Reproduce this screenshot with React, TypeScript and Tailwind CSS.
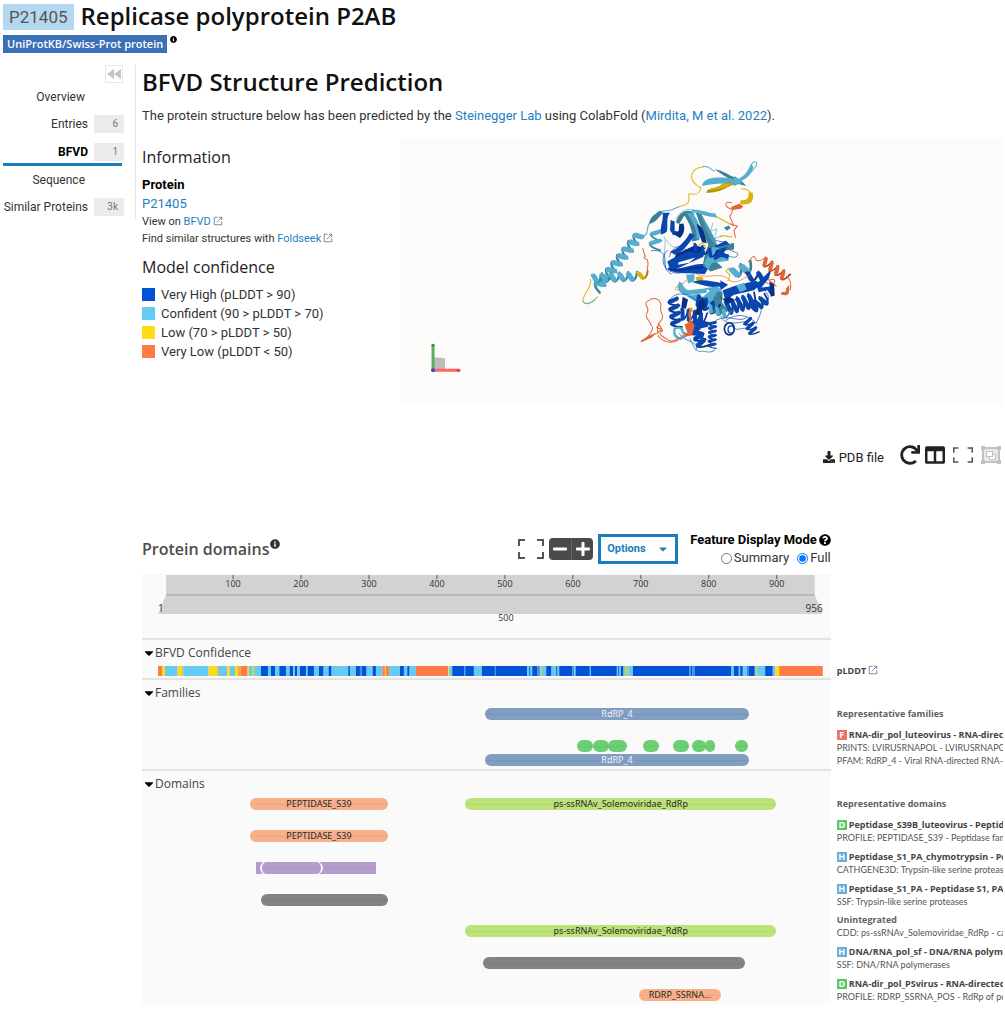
import type { ReactNode } from "react";
import {
  FaCaretDown,
  FaColumns,
  FaDownload,
  FaInfoCircle,
  FaMinus,
  FaPlus,
  FaQuestionCircle,
  FaRedo,
} from "react-icons/fa";

const SEQUENCE_LENGTH = 956;

const NAV_ITEMS = [
  { label: "Overview" },
  { label: "Entries", count: "6" },
  { label: "BFVD", count: "1", active: true },
  { label: "Sequence" },
  { label: "Similar Proteins", count: "3k" },
];

const LEGEND = [
  { label: "Very High (pLDDT > 90)", color: "bg-[#0053d6]" },
  { label: "Confident (90 > pLDDT > 70)", color: "bg-[#65cbf3]" },
  { label: "Low (70 > pLDDT > 50)", color: "bg-[#ffdb13]" },
  { label: "Very Low (pLDDT < 50)", color: "bg-[#ff7d45]" },
];

const CONFIDENCE_COLORS: Record<string, string> = {
  B: "#0053d6",
  M: "#3590e4",
  C: "#65cbf3",
  G: "#b4cf6c",
  Y: "#ffdb13",
  A: "#ffa72c",
  O: "#ff7d45",
};

const CONFIDENCE_END = 1995;

// "<color><start>", each run lasts until the next one starts
const CONFIDENCE =
  "O0 Y12 C21 Y59 G72 C76 Y152 G176 C183 Y208 C216 Y231 A239 O249 Y269 C273 G283 C291 B309 C330 B339 C352 B364 C384 B395 C406 B411 C418 B426 C444 B449 C468 B483 C497 B512 C521 B571 C576 B594 M606 B611 C626 B644 C654 O674 Y681 O684 C693 B726 C738 B748 C755 O774 Y871 C874 B883 M919 B922 C948 B972 M1011 B1013 C1108 B1114 C1118 B1123 M1139 G1146 C1152 B1165 C1181 B1195 C1199 B1204 M1243 C1249 B1253 C1296 B1299 C1377 B1381 C1385 B1389 C1397 G1402 C1413 B1425 M1594 B1598 M1604 B1610 C1721 B1728 C1743 B1747 C1755 M1767 B1772 C1791 G1794 C1800 B1822 C1845 Y1853 O1864"
    .split(" ")
    .map((run) => ({ color: CONFIDENCE_COLORS[run[0]], start: Number(run.slice(1)) }));

interface Feature {
  start: number;
  end: number;
  color: string;
  label?: string;
  shape?: string;
}

interface Row {
  features: Feature[];
  heading?: string;
  type?: "F" | "D" | "H";
  title?: string;
  source?: string;
}

const BLUE = "bg-[#7f9ec2] text-gray-100";
const GREEN = "bg-[#6ccf73]";
const PEACH = "bg-[#f8b08b] text-[#2b2b2b]";
const LIME = "bg-[#bce377] text-[#2b2b2b]";
const GREY = "bg-[#838383]";
const PURPLE = "bg-[#b79dcf]";

const RDRP: Feature = { start: 471, end: 850, color: BLUE, label: "RdRP_4" };

const PRINTS: Feature[] = [
  [604, 625],
  [627, 648],
  [648, 674],
  [698, 721],
  [741, 764],
  [769, 788],
  [787, 801],
  [831, 848],
].map(([start, end]) => ({ start, end, color: GREEN }));

const PEPTIDASE: Feature = { start: 133, end: 331, color: PEACH, label: "PEPTIDASE_S39" };
const SOLEMO: Feature = { start: 443, end: 889, color: LIME, label: "ps-ssRNAv_Solemoviridae_RdRp" };

const DOMAIN_ROWS: Row[] = [
  {
    features: [PEPTIDASE],
    type: "D",
    title: "Peptidase_S39B_luteovirus - Peptidase S39, luteovirus",
    source: "PROFILE: PEPTIDASE_S39 - Peptidase family S39 domain profile",
  },
  {
    features: [
      { start: 142, end: 150, color: PURPLE, shape: "rounded-none" },
      { start: 234, end: 314, color: PURPLE, shape: "rounded-none" },
      { start: 147, end: 237, color: PURPLE, shape: "rounded-full border-x-2 border-[#fafafa]" },
    ],
    type: "H",
    title: "Peptidase_S1_PA_chymotrypsin - Peptidase S1, PA clan",
    source: "CATHGENE3D: Trypsin-like serine proteases",
  },
  {
    features: [{ start: 149, end: 331, color: GREY }],
    type: "H",
    title: "Peptidase_S1_PA - Peptidase S1, PA clan",
    source: "SSF: Trypsin-like serine proteases",
  },
  {
    features: [SOLEMO],
    heading: "Unintegrated",
    source: "CDD: ps-ssRNAv_Solemoviridae_RdRp - catalytic core domain",
  },
  {
    features: [{ start: 469, end: 844, color: GREY }],
    type: "H",
    title: "DNA/RNA_pol_sf - DNA/RNA polymerase superfamily",
    source: "SSF: DNA/RNA polymerases",
  },
  {
    features: [{ start: 693, end: 809, color: PEACH, label: "RDRP_SSRNA..." }],
    type: "D",
    title: "RNA-dir_pol_PSvirus - RNA-directed RNA polymerase",
    source: "PROFILE: RDRP_SSRNA_POS - RdRp of positive ssRNA viruses",
  },
];

const TYPE_COLORS = {
  F: "bg-[#ec7063]",
  D: "bg-[#5ec465]",
  H: "bg-[#65aed9]",
};

const ExternalIcon = () => (
  <svg viewBox="0 0 12 12" className="ml-0.5 inline size-2.5 align-[-1px] text-gray-500" fill="none" stroke="currentColor">
    <path d="M5.5 1.5h-4v9h9v-4M7 1.5h3.5V5M10.5 1.5l-6 6" />
  </svg>
);

const ExpandIcon = ({ className }: { className: string }) => (
  <svg viewBox="0 0 26 20" className={className} fill="none" stroke="currentColor" strokeWidth="2">
    <path d="M7 1H1v6M19 1h6v6M7 19H1v-6M19 19h6v-6" />
  </svg>
);

const GroupIcon = () => (
  <svg viewBox="0 0 20 18" className="h-[18px] w-5" fill="currentColor">
    <path d="M0 0h4v1h12V0h4v4h-1v10h1v4h-4v-1H4v1H0v-4h1V4H0z" />
    <path d="M3 4h1V3h12v1h1v10h-1v1H4v-1H3z" fill="#e9e9e9" />
    <path d="M5 5h7v3h3v6H8v-3H5z" />
    <path d="M6 6h5v4H6z" fill="#fff" />
    <path d="M12 9h2v4H9v-2h3z" fill="#fff" />
  </svg>
);

/* ---------- structure ---------- */

const NAVY = "#0a46b0";
const DEEP = "#082f86";
const SKY = "#54aed0";
const TEAL = "#3a8199";
const GOLD = "#d8b40f";
const CORAL = "#e2643b";

interface HelixProps {
  from: [number, number];
  to: [number, number];
  turns: number;
  amp?: number;
  color: string;
  dark: string;
  width?: number;
}

// Flat ribbon: wide front bands joined by thinner shaded strands behind them
const Helix = ({ from, to, turns, amp = 15, color, dark, width = 10 }: HelixProps) => {
  const [x1, y1] = from;
  const [x2, y2] = to;
  const length = Math.hypot(x2 - x1, y2 - y1);
  const ux = (x2 - x1) / length;
  const uy = (y2 - y1) / length;
  const step = length / turns;
  const at = (along: number, side: number) =>
    `${(x1 + ux * along - uy * side).toFixed(1)} ${(y1 + uy * along + ux * side).toFixed(1)}`;
  const coils = Array.from({ length: turns }, (_, i) => i * step);
  const w = width * 0.55;
  return (
    <g>
      {coils.map((s) => (
        <path
          key={`b${s}`}
          d={`M${at(s + step * 0.4, amp)}Q${at(s + step * 0.85, amp * 0.9)} ${at(s + step, -amp)}`}
          fill="none"
          stroke={dark}
          strokeWidth={width * 0.45}
        />
      ))}
      {coils.map((s) => (
        <path
          key={`f${s}`}
          d={`M${at(s - w, -amp * 0.8)}Q${at(s, -amp * 1.3)} ${at(s + w, -amp * 0.8)}L${at(s + step * 0.4 + w, amp * 0.7)}Q${at(s + step * 0.4, amp * 1.4)} ${at(s + step * 0.4 - w, amp * 0.9)}Z`}
          fill={color}
        />
      ))}
    </g>
  );
};

const ProteinDrawing = () => (
  <g strokeLinejoin="round" strokeLinecap="round">
    {/* N-terminal helices */}
    <Helix from={[212, 284]} to={[80, 448]} turns={8} amp={15} color={SKY} dark={TEAL} width={15} />
    <Helix from={[72, 414]} to={[204, 408]} turns={5} amp={13} color={SKY} dark={TEAL} width={15} />
    <Helix from={[208, 406]} to={[236, 404]} turns={1} amp={11} color={GOLD} dark="#9b7e08" width={13} />
    <g fill="none" strokeWidth="3">
      <path d="M64 418c6 22-24 44-23 66 12 14 32 0 44-14" stroke={GOLD} />
      <path d="M41 484c8 12 26 6 36-6M208 284c14 6 26 2 26-12 0-12 4-20 9-26M275 215c12-6 20 0 32-6 10-5 16-8 24-10" stroke={SKY} />
      <path d="M234 401c-2-18 6-30 0-42-10-6-14-4-6-10-6-14-6-18-7-25" stroke={CORAL} />
      <path d="M331 199c16-4 28-6 28-20 0-12-6-20 10-17 16 2 22-4 26-18C348 118 366 84 402 80" stroke={GOLD} />
      <path d="M402 80c18-3 20 8 34 14M520 112c16-8 24-26 28-42 8-10 18-2 12 8l-14 18" stroke={SKY} />
      <path d="M516 146c14 0 24 4 28 14" stroke={GOLD} />
      <path d="M490 208c-28-6-26-28-4-20M488 208c4 12-4 14-7 20l12 28-11-4 22 6-10 12 4 22" stroke={CORAL} />
      <path d="M440 230c20 6 30 20 46 22M452 290c12-8 22 2 36 0M384 318l16-10 8 12" stroke={GOLD} />
    </g>
    <path d="M240 248c4-18 14-24 32-37l10 8c-12 8-16 24-38 32z" fill={TEAL} />
    <path d="M436 88c28 4 38 18 66 26 12 6 22 14 28 24l-28-8c-20-14-40-22-66-42z" fill={TEAL} />
    <path d="M398 138c2-26 44-30 96-22l4-8 20 20-24 10-2-6c-34-4-62-2-94 6z" fill={SKY} />
    <path d="M500 118c20-4 36-22 44-46l8 8c-6 22-18 36-40 44z" fill={SKY} />
    <path d="M410 158c6-20 36-10 50-28l26-3 12 6c-24 2-32 24-88 25z" fill="#b29507" />
    <path d="M414 150c22-8 34-6 50-18l24-2c-20 14-40 18-74 20z" fill={GOLD} />
    <path d="M538 156l12 2c4 24-2 38-38 35l2-13c16 2 24 0 24-24z" fill={GOLD} />
    <path d="M486 200l24-9 12 8-8 7-26 4z" fill={CORAL} />

    {/* upper domain */}
    <g fill="none" strokeWidth="2">
      <path d="M320 235c20-34 50-30 62-20M285 290c10 30-10 50 5 100M292 300c20 40 50 10 60 40M430 250l-6 24 18-8-6 30 24-10" stroke={SKY} />
      <path d="M300 350c20-50 44-30 60-10M295 330c-20 20-20 50 10 64 28 16 50-12 70-4M410 290c20 4 40 20 60 14M476 326c20 14 40 10 24 24-10 6-22-8-30 4" stroke={NAVY} />
      <path d="M246 332c20-4 36 4 40 18 4 20-4 40 20 52" stroke={NAVY} />
      <path d="M350 420c-10 22-40 12-30 30M380 400c30 22 80-10 100 20M300 340l24-14 20 8" stroke={CORAL} />
    </g>
    <Helix from={[262, 272]} to={[256, 328]} turns={2} amp={17} color={SKY} dark={TEAL} width={12} />
    <path d="M280 218h22c-14 18-4 38-10 58l-16 8c-6-26 8-44 4-66z" fill={NAVY} />
    <path d="M304 240l12 4v28l8 2-12 12-10-16z" fill={NAVY} />
    <path d="M330 252l12-2c8 20-2 36-10 44l-20-12 16-10z" fill={DEEP} />
    <path d="M320 248c6-40 50-46 56-22l-8 2c-20-16-28 8-38 24z" fill={TEAL} />
    <path d="M344 224l18-6c28 32 22 50 28 82l-22 4c4-30-8-56-24-80z" fill={TEAL} />
    <path d="M352 218l18 2c22 26 22 44 22 76l-10 2c2-34-16-60-30-80z" fill={SKY} />
    <path d="M378 214l14-2c14 34 34 56 52 104l-12 12-10-8c-20-30-24-54-44-106z" fill={TEAL} />
    <path d="M392 216c16 30 34 56 48 96l-6 4c-18-30-30-62-42-100z" fill={SKY} opacity="0.6" />
    <path d="M368 208c34 2 44 8 64 12l4-2 8 14-20-2c-20-2-38-12-58-14z" fill={SKY} />
    <path d="M382 250c22 12 24 34 30 60l-14-4c-6-20-12-36-16-56z" fill={DEEP} />
    <path d="M302 334c20-4 46-30 60-56l14 8c-16 22-36 52-60 58z" fill={NAVY} />
    <path d="M294 364l72-40 40 10-4 16-98 44z" fill={NAVY} />
    <path d="M320 342l56-26 34 8-20 14-34-4-40 20z" fill={DEEP} />
    <path d="M328 366l50-14-18 16-34 6z" fill="#fcfbf9" />
    <path d="M296 382c40 12 70-14 108-10l14 10-12 20c-42-6-80 4-110-14z" fill={NAVY} />
    <path d="M300 388c38 8 64-8 100-6" fill="none" stroke={DEEP} strokeWidth="4" />
    <path d="M410 330l60-28 16 16-34 18 28 8-6 18-54-4-16 12z" fill={NAVY} />
    <path d="M424 296l16 26 54-14v20l-60 8-24 36 30-8 20 18-36 12-24-18 8-38z" fill={TEAL} />
    <path d="M430 320l20 4-20 32 40-8 8 14-50 6-12 22-12-20z" fill={SKY} />
    <path d="M440 330l34-10-10 18 16 20-24-8-22 12z" fill={NAVY} />
    <path d="M464 262l14-6 6 8-12 8z" fill={TEAL} />
    <Helix from={[374, 320]} to={[440, 344]} turns={3} amp={12} color={NAVY} dark={DEEP} />

    {/* palm and fingers */}
    <Helix from={[490, 398]} to={[548, 378]} turns={2} amp={16} color={SKY} dark={TEAL} width={18} />
    <Helix from={[534, 408]} to={[600, 410]} turns={2} amp={14} color={NAVY} dark={DEEP} width={14} />
    <Helix from={[584, 362]} to={[654, 414]} turns={4} amp={14} color={CORAL} dark="#9e3d1d" width={11} />
    <g fill="none" strokeWidth="3">
      <path d="M536 364c8 0 10-20 20-14 2 16 16 14 26 6M600 420c24-12 18 20 0 12s-20-10-8-18l28 24" stroke={CORAL} />
      <path d="M652 408c14 14 14 30 10 42" stroke={CORAL} />
      <path d="M478 384l-8 10 12 10-6 18M470 450l30-8M340 430c-20 0-20 30 0 20" stroke={GOLD} />
      <path d="M480 420c20 18 48-12 62-14" stroke={CORAL} strokeWidth="2" />
    </g>
    <path d="M660 434l-2 26c-6 8-16 6-24 2l4-8c10 4 14 0 12-10z" fill={CORAL} />
    <path d="M350 404l26-2-2 22-18 6z" fill={SKY} />
    <path d="M378 412c12-6 26-4 24 8l-18 6z" fill={GOLD} />
    <path d="M370 426c26-12 56-2 84 2l-2-8 24 14-22 16-2-10c-30 2-48-4-82-14z" fill={NAVY} />
    <path d="M330 424c14 6 10 22 28 26l54-6v14l-64 8c-18-6-28-24-18-42z" fill={SKY} />
    <path d="M352 468l40-8 4 14 26-22-16-8 40-6 14 18-28 34-34 6z" fill={SKY} />
    <path d="M460 450l40-14 60-14 14 10-20 18-60 14-26 18z" fill={NAVY} />
    <path d="M500 436l24-8 8 20-20 8z" fill={SKY} />
    <path d="M560 432l36-34 4 14-24 30 30-4 8 20-8 10-12-18-26 6z" fill={NAVY} />
    <path d="M600 424l14 8 2 34-12 4z" fill={DEEP} />
    <path d="M424 490l20-36 16 4-2 30 20 24-30 14-20-12z" fill={TEAL} />
    <Helix from={[312, 476]} to={[322, 562]} turns={4} amp={16} color={NAVY} dark={DEEP} width={12} />
    <Helix from={[336, 520]} to={[410, 536]} turns={4} amp={18} color={NAVY} dark={DEEP} width={11} />
    <Helix from={[384, 480]} to={[444, 510]} turns={3} amp={17} color={NAVY} dark={DEEP} width={14} />
    <Helix from={[474, 502]} to={[560, 478]} turns={5} amp={22} color={NAVY} dark={DEEP} width={12} />
    <Helix from={[548, 504]} to={[594, 474]} turns={3} amp={16} color={NAVY} dark={DEEP} width={12} />
    <Helix from={[430, 546]} to={[428, 624]} turns={6} amp={12} color={NAVY} dark={DEEP} width={8} />
    <Helix from={[534, 540]} to={[556, 582]} turns={3} amp={15} color={NAVY} dark={DEEP} width={9} />
    <Helix from={[378, 566]} to={[402, 622]} turns={3} amp={16} color={NAVY} dark={DEEP} width={13} />
    <Helix from={[420, 504]} to={[480, 524]} turns={3} amp={12} color={SKY} dark={TEAL} width={11} />
    <g fill="none" stroke={NAVY} strokeWidth="2">
      <ellipse cx="480" cy="566" rx="15" ry="18" stroke={DEEP} strokeWidth="5" />
      <ellipse cx="485" cy="568" rx="9" ry="11" strokeWidth="4" />
      <path d="M440 540c40-20 70 10 92-8M454 528c10 30 60 20 80 14M498 566c10 6 24-8 36 2M470 540c30-20 60-20 90 8M560 500c30-10 10 30 0 50M586 466c30 10-10 40-30 30M452 470c20 20 40-8 56 20M300 480c20-30 60-20 80 0M330 580c20 30 60 20 50 50M588 454c14 12 8 26 4 38" />
    </g>
    <path d="M400 470l10 22-20 34-14-4 10-30z" fill={DEEP} />
    <path d="M340 470l16 8-6 28-14-4z" fill={DEEP} />
    <path d="M460 478l20-8 16 10-20 12z" fill={DEEP} />
    <path d="M380 536l40 10-4 14-34 8 24 12-8 22-26-24-10-30z" fill={NAVY} />
    <path d="M316 566c14-8 24-2 24 10l14 8-20 12c-18-4-22-18-18-30z" fill="none" stroke={SKY} strokeWidth="7" />
    <path d="M362 596c12 20 10 34 30 38 20-6 24 10 44-4" fill="none" stroke={SKY} strokeWidth="3" />
    <path d="M346 554l20-14 10 16-8 30-24 4 10-12z" fill={CORAL} />
    <path d="M366 506c-14 20 2 22-4 38" fill="none" stroke={CORAL} strokeWidth="7" />
    <path d="M360 504l10 8" stroke={GOLD} strokeWidth="5" />

    {/* disordered tail */}
    <path
      d="M246 556c-6-18-22-24-12-40 10-14-16-22 2-34 24-16 42 0 38 20-4 16 14 24 2 38-14 14-12 24-10 40M250 560c2 12-8 22-20 36l34-18 14-10-16-6 8-8 10 18c-20 10 6 20 18 28 10 6 30-2 50-20M266 586c16 22 40 24 60 14"
      fill="none"
      stroke={CORAL}
      strokeWidth="3"
    />
    <path d="M214 602l26-16 20-8-12 14-32 14z" fill={CORAL} />
  </g>
);

const StructureViewer = () => (
  <svg viewBox="0 0 602 266" className="block w-full bg-[#fcfbf9]" role="img" aria-label="Predicted structure">
    <g transform="translate(169 2) scale(0.3333)">
      <ProteinDrawing />
    </g>
    <path d="M34 219l11 1v12H34z" fill="#bdbcba" />
    <path d="M33 207v25" stroke="#5fae60" strokeWidth="3" strokeLinecap="round" />
    <path d="M33 232h26" stroke="#ff6565" strokeWidth="3" strokeLinecap="round" />
    <circle cx="33" cy="207" r="1.5" fill="#2f9440" />
    <circle cx="58" cy="232" r="1.5" fill="#e93338" />
    <circle cx="33" cy="232" r="2" fill="#4a48c0" />
  </svg>
);

/* ---------- protein viewer ---------- */

const Bars = ({ features }: { features: Feature[] }) => (
  <div className="relative mr-2 ml-4 h-3 font-['Noto_Sans',sans-serif]">
    {features.map((feature) => (
      <div
        key={feature.start}
        className={`absolute inset-y-0 text-center text-[9px] leading-[11px] ${feature.shape ?? "rounded-full"} ${feature.color}`}
        style={{
          left: `${((feature.start - 1) / SEQUENCE_LENGTH) * 100}%`,
          width: `${((feature.end - feature.start + 1) / SEQUENCE_LENGTH) * 100}%`,
        }}
      >
        <span className="absolute inset-x-0 top-1/2 h-px bg-black/5" />
        {feature.label}
      </div>
    ))}
  </div>
);

const TypeBadge = ({ type }: { type: "F" | "D" | "H" }) => (
  <span className={`mr-0.5 inline-block size-2.5 text-center text-[9px] leading-[10px] text-white ${TYPE_COLORS[type]}`}>
    {type}
  </span>
);

const Track = ({ children, className = "" }: { children?: ReactNode; className?: string }) => (
  <div className={`bg-[#fafafa] ${className}`}>{children}</div>
);

const Side = ({ children, className = "" }: { children?: ReactNode; className?: string }) => (
  <div className={`min-w-0 overflow-hidden pl-1.5 font-['Open_Sans',sans-serif] text-[9px] leading-[13px] whitespace-nowrap text-[#5f5f5f] ${className}`}>
    {children}
  </div>
);

const Source = ({ children }: { children: ReactNode }) => (
  <p className="font-[Lato,sans-serif] text-[9px] text-[#555]">{children}</p>
);

const ROW = "grid grid-cols-[4fr_1fr]";

const SectionToggle = ({ label }: { label: string }) => (
  <button type="button" className="flex items-center pl-0.5 font-['Open_Sans',sans-serif] text-xs leading-5 text-[#444]">
    <FaCaretDown className="mr-px h-3.5 w-2.5 text-black" />
    {label}
  </button>
);

const Ruler = () => (
  <svg viewBox="0 0 689 64" className="block w-full bg-[#fafafa] font-['Open_Sans',sans-serif]" fill="#333">
    <path d="M24 1h649v20l8 19H16l8-19z" fill="#d2d2d2" />
    <path d="M24 20h649v2H24z" fill="#b8b8b8" />
    {[100, 200, 300, 400, 500, 600, 700, 800, 900].map((tick) => (
      <g key={tick}>
        <path d={`M${23 + tick * 0.68} 1v4`} stroke="#555" />
        <text x={23 + tick * 0.68} y="13" fontSize="9" textAnchor="middle">
          {tick}
        </text>
      </g>
    ))}
    <text x="16" y="38" fontSize="10">1</text>
    <text x="681" y="38" fontSize="10" textAnchor="end">956</text>
    <text x="364" y="47" fontSize="9" textAnchor="middle">500</text>
  </svg>
);

const ProteinViewer = () => (
  <section className="text-[13px]">
    <div className={ROW}>
      <div className="flex h-[38px] items-center">
        <h4 className="mr-auto flex items-start font-['Open_Sans',sans-serif] text-base leading-5 font-semibold text-[#4d4d4d]">
          Protein domains
          <FaInfoCircle className="size-2.5 text-[#333]" />
        </h4>
        <button type="button" aria-label="Full screen" className="mr-[5px]">
          <ExpandIcon className="h-5 w-[26px] text-[#555]" />
        </button>
        <button type="button" aria-label="Zoom out" className="flex h-[22px] w-[22px] items-center justify-center rounded-l-sm bg-[#4a4a4a] text-white">
          <FaMinus className="size-4" />
        </button>
        <button type="button" aria-label="Zoom in" className="mr-[5px] flex h-[22px] w-[22px] items-center justify-center rounded-r-sm border-l border-[#666] bg-[#4a4a4a] text-white">
          <FaPlus className="size-4" />
        </button>
        <button type="button" className="mr-3 flex h-[30px] w-20 items-center justify-between border-[3px] border-[#1a7dbe] bg-white px-1.5 text-[11px] font-bold text-[#1a7dbe]">
          Options
          <FaCaretDown className="size-3" />
        </button>
        <fieldset className="text-[13px] leading-[18px]">
          <legend className="flex items-center gap-0.5 font-bold text-black">
            Feature Display Mode <FaQuestionCircle className="size-3" />
          </legend>
          <div className="flex justify-end text-[#333]">
            <label className="mr-2 flex items-center gap-0.5">
              <input type="radio" name="mode" className="m-0 size-[11px]" />
              Summary
            </label>
            <label className="flex items-center gap-0.5">
              <input type="radio" name="mode" defaultChecked className="m-0 size-[11px]" />
              Full
            </label>
          </div>
        </fieldset>
      </div>
    </div>

    <div className={`mt-1.5 ${ROW}`}>
      <Ruler />
    </div>

    <div className={ROW}>
      <Track className="h-10 border-t-2 border-[#e3e3e3] pt-[3px]">
        <SectionToggle label="BFVD Confidence" />
        <svg viewBox={`0 0 ${CONFIDENCE_END} 10`} preserveAspectRatio="none" className="mt-[3px] ml-4 block h-2.5 w-[calc(100%-24px)]">
          {CONFIDENCE.map(({ color, start }, i) => (
            <rect
              key={start}
              x={start}
              width={(CONFIDENCE[i + 1]?.start ?? CONFIDENCE_END) - start}
              height="10"
              fill={color}
            />
          ))}
        </svg>
      </Track>
      <Side className="pt-[26px] font-bold text-[#444]">
        pLDDT
        <ExternalIcon />
      </Side>
    </div>

    <div className={ROW}>
      <Track className="h-[91px] border-t-2 border-[#e3e3e3] pt-[3px]">
        <SectionToggle label="Families" />
        <div className="mt-[5px] mb-5">
          <Bars features={[RDRP]} />
        </div>
        <Bars features={PRINTS} />
        <div className="mt-0.5">
          <Bars features={[RDRP]} />
        </div>
      </Track>
      <Side>
        <p className="mt-[29px] mb-2 font-bold">Representative families</p>
        <p className="font-bold text-[#444]">
          <TypeBadge type="F" />
          RNA-dir_pol_luteovirus - RNA-directed RNA polymerase
        </p>
        <Source>PRINTS: LVIRUSRNAPOL - LVIRUSRNAPOL</Source>
        <Source>PFAM: RdRP_4 - Viral RNA-directed RNA-polymerase</Source>
      </Side>
    </div>

    <div className={ROW}>
      <Track className="h-[45px] border-t-2 border-[#e3e3e3] pt-[3px]">
        <SectionToggle label="Domains" />
        <div className="mt-1">
          <Bars features={[PEPTIDASE, SOLEMO]} />
        </div>
      </Track>
      <Side className="pt-7 font-bold">Representative domains</Side>
    </div>

    <div className="grid h-[190px] auto-rows-fr">
      {DOMAIN_ROWS.map((row) => (
        <div key={row.source} className={ROW}>
          <Track className="pt-4">
            <Bars features={row.features} />
          </Track>
          <Side className="pt-1">
            <p className="font-bold text-[#444]">
              {row.type && <TypeBadge type={row.type} />}
              {row.title ?? <span className="text-[#5f5f5f]">{row.heading}</span>}
            </p>
            <Source>{row.source}</Source>
          </Side>
        </div>
      ))}
    </div>
  </section>
);

/* ---------- page ---------- */

const Sidebar = () => (
  <nav className="h-[155px] w-[133px] shrink-0 border-r border-[#e6e6e6] text-xs leading-5 text-[#333]">
    <div className="flex justify-end pr-3">
      <button type="button" aria-label="Collapse menu" className="flex size-[18px] items-center justify-center border border-[#e8e8e8] text-[#c4c4c4]">
        <svg viewBox="0 0 14 12" className="h-3 w-3.5" fill="currentColor">
          <path d="M7 1v10L0 6zM14 1v10L7 6z" />
        </svg>
      </button>
    </div>
    <ul className="w-[121px]">
      {NAV_ITEMS.map(({ label, count, active }) => (
        <li key={label} className={active ? "flex h-[29px] w-[119px] items-end border-b-[3px] border-[#1a7dbe] pb-px" : "flex h-[27px] items-center"}>
          <a href="#" className={`flex grow items-center justify-end gap-1.5 whitespace-nowrap ${active ? "-mr-0.5 font-bold text-black" : ""}`}>
            {label}
            {count ? (
              <span className="w-[30px] bg-[#ececec] pr-1.5 text-right text-[10px] leading-[18px] font-normal text-[#777]">
                {count}
              </span>
            ) : (
              <span className="w-[33px]" />
            )}
          </a>
        </li>
      ))}
    </ul>
  </nav>
);

const Link = ({ children }: { children: ReactNode }) => (
  <a href="#" className="text-[#1f7fc1]">
    {children}
  </a>
);

export default function App() {
  return (
    <div className="w-full bg-white pr-0.5 pb-5 pl-[3px] font-[Roboto,'Liberation_Sans',sans-serif] text-[#333]">
      <header>
        <div className="flex items-center gap-[7px]">
          <span className="mt-0.5 bg-[#b5d8f1] px-1.5 text-[17px] leading-[26px] text-[#555]">P21405</span>
          <h1 className="font-['Open_Sans',sans-serif] text-2xl leading-8 font-semibold text-[#111]">
            Replicase polyprotein P2AB
          </h1>
        </div>
        <div className="mt-[3px] flex h-[18px] items-start">
          <span className="bg-[#3b6fb6] px-1 font-['Open_Sans',sans-serif] text-[11px] leading-[18px] font-semibold text-white">
            UniProtKB/Swiss-Prot protein
          </span>
          <FaInfoCircle className="mt-px ml-[3px] size-[7px] text-black" />
        </div>
      </header>

      <div className="mt-3 flex">
        <Sidebar />
        <main className="ml-1.5 min-w-0 grow">
          <h2 className="pt-0.5 font-['Open_Sans',sans-serif] text-2xl leading-[30px] font-semibold text-[#111]">
            BFVD Structure Prediction
          </h2>
          <p className="mt-[9px] text-[13px] leading-5">
            The protein structure below has been predicted by the <Link>Steinegger Lab</Link> using ColabFold (
            <Link>Mirdita, M et al. 2022</Link>).
          </p>

          <div className="mt-3 grid grid-cols-[3fr_7fr]">
            <section>
              <h4 className="mt-[7px] font-['Open_Sans',sans-serif] text-base leading-6 text-[#222]">Information</h4>
              <p className="mt-[7px] text-[13px] leading-[18px] font-bold text-black">Protein</p>
              <p className="text-[13px] leading-5">
                <Link>P21405</Link>
              </p>
              <p className="text-[11px] leading-4">
                View on <Link>BFVD</Link>
                <ExternalIcon />
              </p>
              <p className="text-[11px] leading-[17px]">
                Find similar structures with <Link>Foldseek</Link>
                <ExternalIcon />
              </p>
              <h4 className="mt-2 mb-1.5 font-['Open_Sans',sans-serif] text-base leading-6 text-[#222]">
                Model confidence
              </h4>
              <ul>
                {LEGEND.map(({ label, color }) => (
                  <li key={label} className="flex items-center gap-1.5 text-[13px] leading-[19px]">
                    <span className={`size-[13px] ${color}`} />
                    {label}
                  </li>
                ))}
              </ul>
            </section>
            <StructureViewer />
          </div>

          <div className="mt-[39px] mb-[63px] flex h-6 items-center justify-end pr-0.5 text-[#222]">
            <a href="#" className="mr-4 flex items-center gap-1 pt-1 text-[13px]">
              <FaDownload className="size-3" />
              PDB file
            </a>
            <button type="button" aria-label="Reset view" className="mr-[5px]">
              <FaRedo className="size-5" />
            </button>
            <button type="button" aria-label="Split view" className="mr-2">
              <FaColumns className="size-5" />
            </button>
            <button type="button" aria-label="Full screen" className="mr-2">
              <ExpandIcon className="h-4 w-5 text-[#555]" />
            </button>
            <button type="button" aria-label="Picture in picture" className="text-[#c2c2c2]">
              <GroupIcon />
            </button>
          </div>

          <ProteinViewer />
        </main>
      </div>
    </div>
  );
}
